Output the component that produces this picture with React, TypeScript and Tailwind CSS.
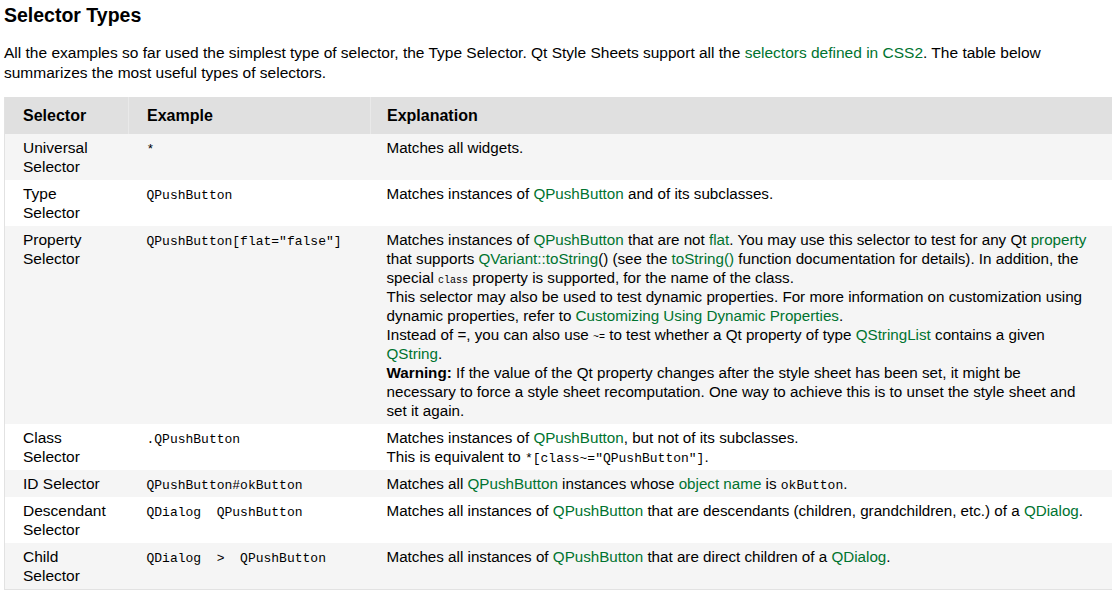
import * as React from "react";

// green used for Qt doc links
const L = ({ children }: { children: React.ReactNode }) => (
  <span className="text-[#00732f]">{children}</span>
);

const Code = ({ children, small }: { children: React.ReactNode; small?: boolean }) => (
  <code
    className={
      small
        ? "font-['Liberation_Mono','Courier_New',monospace] text-[10px] leading-[0] whitespace-pre"
        : "font-['Liberation_Mono','Courier_New',monospace] text-[13px] leading-[0] whitespace-pre"
    }
  >
    {children}
  </code>
);

interface Row {
  name: React.ReactNode;
  example: string;
  explanation: React.ReactNode;
}

const rows: Row[] = [
  {
    name: (
      <>
        Universal
        <br />
        Selector
      </>
    ),
    example: "*",
    explanation: <>Matches all widgets.</>,
  },
  {
    name: (
      <>
        Type
        <br />
        Selector
      </>
    ),
    example: "QPushButton",
    explanation: (
      <>
        Matches instances of <L>QPushButton</L> and of its subclasses.
      </>
    ),
  },
  {
    name: (
      <>
        Property
        <br />
        Selector
      </>
    ),
    example: 'QPushButton[flat="false"]',
    explanation: (
      <>
        Matches instances of <L>QPushButton</L> that are not <L>flat</L>. You may use this selector to test for any Qt{" "}
        <L>property</L>
        <br />
        that supports <L>QVariant::toString</L>() (see the <L>toString()</L> function documentation for details). In
        addition, the
        <br />
        special <Code small>class</Code> property is supported, for the name of the class.
        <br />
        This selector may also be used to test dynamic properties. For more information on customization using
        <br />
        dynamic properties, refer to <L>Customizing Using Dynamic Properties</L>.
        <br />
        Instead of =, you can also use <Code small>~=</Code> to test whether a Qt property of type <L>QStringList</L>{" "}
        contains a given
        <br />
        <L>QString</L>.
        <br />
        <b>Warning:</b> If the value of the Qt property changes after the style sheet has been set, it might be
        <br />
        necessary to force a style sheet recomputation. One way to achieve this is to unset the style sheet and
        <br />
        set it again.
      </>
    ),
  },
  {
    name: (
      <>
        Class
        <br />
        Selector
      </>
    ),
    example: ".QPushButton",
    explanation: (
      <>
        Matches instances of <L>QPushButton</L>, but not of its subclasses.
        <br />
        This is equivalent to <Code>*[class~="QPushButton"]</Code>.
      </>
    ),
  },
  {
    name: <>ID Selector</>,
    example: "QPushButton#okButton",
    explanation: (
      <>
        Matches all <L>QPushButton</L> instances whose <L>object name</L> is <Code>okButton</Code>.
      </>
    ),
  },
  {
    name: (
      <>
        Descendant
        <br />
        Selector
      </>
    ),
    example: "QDialog  QPushButton",
    explanation: (
      <>
        Matches all instances of <L>QPushButton</L> that are descendants (children, grandchildren, etc.) of a{" "}
        <L>QDialog</L>.
      </>
    ),
  },
  {
    name: (
      <>
        Child
        <br />
        Selector
      </>
    ),
    example: "QDialog  >  QPushButton",
    explanation: (
      <>
        Matches all instances of <L>QPushButton</L> that are direct children of a <L>QDialog</L>.
      </>
    ),
  },
];

export default function App() {
  return (
    <div className="w-[1112px] h-[595px] overflow-hidden bg-white text-black font-['Liberation_Sans',Arial,sans-serif]">
      <h2 className="pl-1 pt-[3px] text-[19.5px] leading-6 font-bold">Selector Types</h2>

      <p className="pl-1 mt-[16px] text-[15.5px] leading-5">
        All the examples so far used the simplest type of selector, the Type Selector. Qt Style Sheets support all the{" "}
        <L>selectors defined in CSS2</L>. The table below
        <br />
        summarizes the most useful types of selectors.
      </p>

      <table className="ml-1 mt-[14px] w-[1108px] border-collapse border-l border-b border-[#e2e2e2] table-fixed">
        <colgroup>
          <col className="w-[124px]" />
          <col className="w-[242px]" />
          <col />
        </colgroup>
        <thead>
          <tr className="bg-[#e0e0e0] text-left text-[16px] leading-[21px] font-bold">
            <th className="pl-[18px] py-2 border-r border-[#e9e9e9]">Selector</th>
            <th className="pl-[18px] py-2 border-r border-[#e9e9e9]">Example</th>
            <th className="pl-4 py-2">Explanation</th>
          </tr>
        </thead>
        <tbody>
          {rows.map((r, i) => (
            <tr key={i} className={i % 2 === 0 ? "bg-[#f5f5f5] align-top" : "bg-white align-top"}>
              <td className="pl-[18px] pt-1 pb-1 text-[15.5px] leading-[19px]">{r.name}</td>
              <td className="pl-[18px] pt-1 pb-1 leading-[19px]">
                <Code>{r.example}</Code>
              </td>
              <td className="pl-4 pt-1 pb-1 text-[15.2px] leading-[19px] whitespace-nowrap">{r.explanation}</td>
            </tr>
          ))}
        </tbody>
      </table>
    </div>
  );
}
